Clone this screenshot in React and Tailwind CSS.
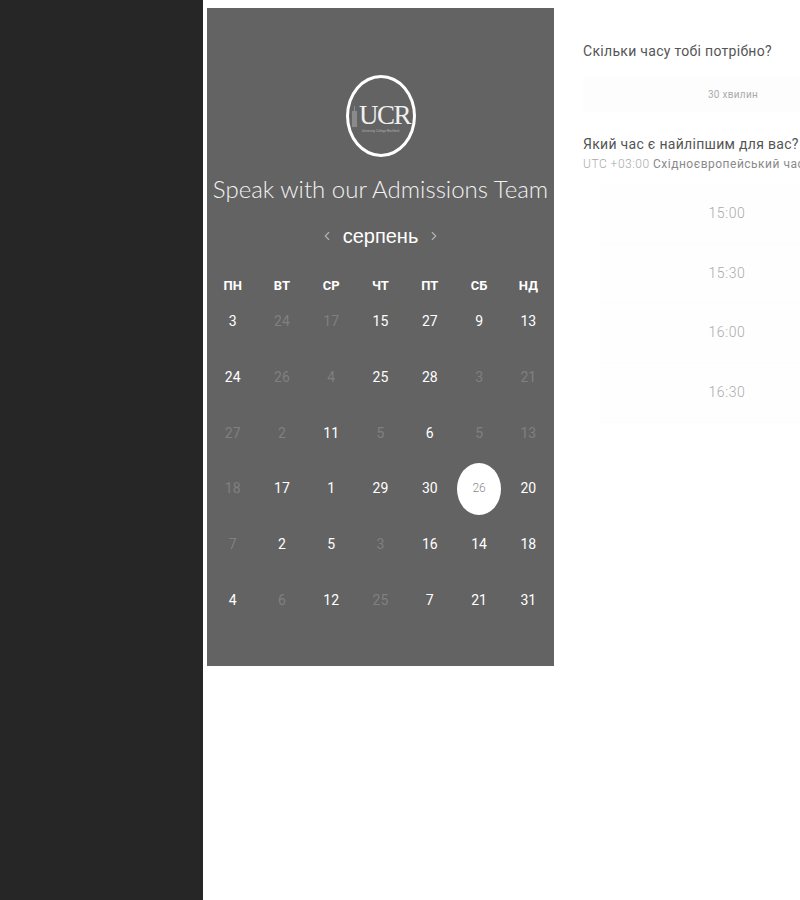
import { ChevronLeft, ChevronRight } from 'lucide-react'

const weekDays = ['ПН', 'ВТ', 'СР', 'ЧТ', 'ПТ', 'СБ', 'НД']

// [day, state] state: 1 = available, 0 = disabled, 2 = selected
const days = [
  [3, 1], [24, 0], [17, 0], [15, 1], [27, 1], [9, 1], [13, 1],
  [24, 1], [26, 0], [4, 0], [25, 1], [28, 1], [3, 0], [21, 0],
  [27, 0], [2, 0], [11, 1], [5, 0], [6, 1], [5, 0], [13, 0],
  [18, 0], [17, 1], [1, 1], [29, 1], [30, 1], [26, 2], [20, 1],
  [7, 0], [2, 1], [5, 1], [3, 0], [16, 1], [14, 1], [18, 1],
  [4, 1], [6, 0], [12, 1], [25, 0], [7, 1], [21, 1], [31, 1],
]

const times = ['15:00', '15:30', '16:00', '16:30']

function Logo() {
  return (
    <div className="w-[70px] h-[82px] rounded-[50%] border-[3px] border-white flex flex-col items-center justify-center">
      <div className="flex items-end mt-[2px]">
        <svg width="7" height="21" viewBox="0 0 7 21" className="mb-[2px] mr-px">
          <path d="M3 0h1v5h2v16H1V5h2z" fill="#8a8a8a" />
        </svg>
        <span className="font-['Liberation_Serif',serif] text-[27px] leading-[27px] tracking-[-1.5px] text-[#f0f0f0]">UCR</span>
      </div>
      <span className="font-['Liberation_Sans',sans-serif] text-[3px] leading-[4px] text-[#b5b5b5] whitespace-nowrap">University College Rochford</span>
    </div>
  )
}

function DayCell({ day, state }) {
  if (state === 2) {
    return (
      <div className="h-[55.7px] flex items-center justify-center">
        <div className="w-[44px] h-[52px] rounded-[50%] bg-white flex items-center justify-center pb-[2px] text-[12px] font-light text-[#8c8c8c]">
          {day}
        </div>
      </div>
    )
  }
  return (
    <div className={`h-[55.7px] flex items-center justify-center text-[14px] ${state === 1 ? 'text-white' : 'text-[#808080]'}`}>
      {day}
    </div>
  )
}

export default function App() {
  return (
    <div className="h-[900px] w-[800px] flex overflow-hidden bg-white font-['Roboto',sans-serif]">
      <aside className="w-[203px] h-full bg-[#262626] flex-shrink-0" />

      <div className="ml-[4px] mt-[8px] w-[347px] h-[658px] bg-[#636363] flex-shrink-0 flex flex-col items-center px-px">
        <div className="mt-[67px]">
          <Logo />
        </div>
        <h1 className="mt-[16px] font-['Lato',sans-serif] font-light text-[24px] leading-[32px] text-[#f2f2f2] whitespace-nowrap">
          Speak with our Admissions Team
        </h1>
        <div className="mt-[15px] flex items-center gap-[9px] h-[32px]">
          <ChevronLeft size={14} className="text-[#b0b0b0]" />
          <span className="text-[20px] leading-[24px] text-white font-['Liberation_Sans',sans-serif]">серпень</span>
          <ChevronRight size={14} className="text-[#b0b0b0]" />
        </div>
        <div className="mt-[22px] w-full grid grid-cols-7">
          {weekDays.map(d => (
            <div key={d} className="h-[24px] flex items-center justify-center text-[13px] font-bold text-white">{d}</div>
          ))}
        </div>
        <div className="w-full grid grid-cols-7 -mt-[4px]">
          {days.map(([day, state], i) => (
            <DayCell key={i} day={day} state={state} />
          ))}
        </div>
      </div>

      <div className="ml-[29px] flex-1 min-w-0 overflow-hidden">
        <h2 className="mt-[42px] text-[14px] leading-[18px] tracking-[0.3px] text-[#555555] whitespace-nowrap">Скільки часу тобі потрібно?</h2>
        <div className="mt-[16px] h-[36px] w-[300px] bg-[#fdfdfd] flex items-center justify-center text-[10px] tracking-[0.3px] text-[#aaaaaa]">
          30 хвилин
        </div>
        <h2 className="mt-[23px] text-[14px] leading-[18px] tracking-[0.3px] text-[#555555] whitespace-nowrap">Який час є найліпшим для вас?</h2>
        <p className="mt-[3px] text-[12px] leading-[16px] tracking-[0.5px] whitespace-nowrap text-[#8a8a8a]">
          <span className="font-light text-[#aaaaaa]">UTC +03:00</span> Східноєвропейський час
        </p>
        <div className="mt-[12px] ml-[17px] w-[254px] flex flex-col">
          {times.map(t => (
            <div key={t} className="h-[59.7px] border-b border-[#fcfcfc] bg-[#fefefe] flex items-center justify-center text-[14px] font-light tracking-[0.6px] text-[#ababab]">
              {t}
            </div>
          ))}
        </div>
      </div>
    </div>
  )
}
